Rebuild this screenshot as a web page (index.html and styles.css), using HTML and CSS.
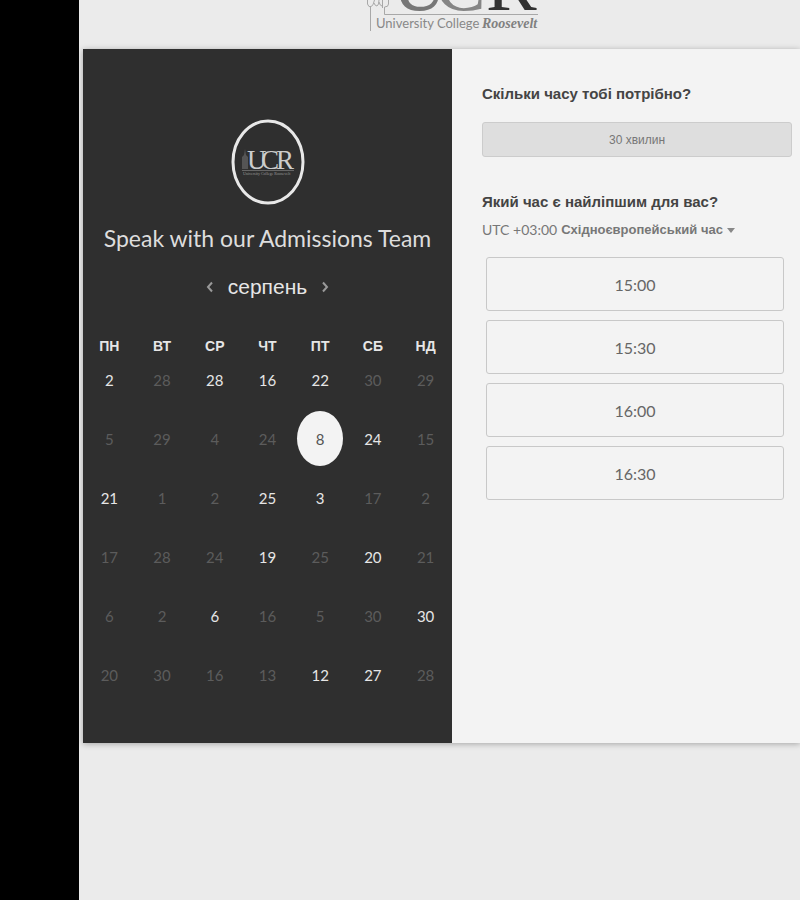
FILE: index.html
```
<!DOCTYPE html>
<html lang="uk">
<head>
<meta charset="utf-8">
<meta name="viewport" content="width=device-width, initial-scale=1">
<title>Speak with our Admissions Team</title>
<link rel="stylesheet" href="styles.css">
</head>
<body>
<div class="page">
  <header class="brand">
    <svg class="brand-logo" width="180" height="36" viewBox="362 0 180 36" role="img" aria-label="University College Roosevelt">
      <g fill="none" stroke="#a8a8a8" stroke-width="1">
        <path d="M370.500 31V6M384.500 14.500H538M384.500 14.500V7"/>
        <path d="M367.500 0v4q1 3 3 3 3-1 4-7M374 3q1 3 3 3 2-1 2-6M379 2q1 4 3 4M384.500 7q4 0 4-3V0M382.500 0v8"/>
      </g>
      <g class="brand-caps">
        <text x="392" y="10" fill="#777">U</text>
        <text x="435" y="10" fill="#858585">C</text>
        <text x="486" y="10" fill="#333">R</text>
      </g>
      <text class="brand-name" x="376" y="28">University College</text>
      <text class="brand-italic" x="482" y="28">Roosevelt</text>
    </svg>
  </header>
  <main class="booking">
    <section class="calendar">
      <svg class="avatar" width="74" height="86" viewBox="0 0 74 86" role="img" aria-label="UCR">
        <ellipse cx="37" cy="43" rx="35" ry="41" fill="none" stroke="#e8e8e8" stroke-width="3"/>
        <path d="M11 50V38l2-2 1-6 1 6 2 2v12z" fill="#555"/>
        <path d="M11 51.500h52" stroke="#666" stroke-width="1"/>
        <g class="avatar-caps">
          <text x="16" y="50">U</text><text x="30" y="50">C</text><text x="45" y="50">R</text>
        </g>
        <text class="avatar-name" x="12" y="56">University College Roosevelt</text>
      </svg>
      <h1>Speak with our Admissions Team</h1>
      <div class="month">
        <button type="button" aria-label="Попередній місяць"><svg width="8" height="12" viewBox="0 0 8 12"><path d="M6 1.500L2 6l4 4.500"/></svg></button>
        <h2>серпень</h2>
        <button type="button" aria-label="Наступний місяць"><svg width="8" height="12" viewBox="0 0 8 12"><path d="M2 1.500L6 6l-4 4.500"/></svg></button>
      </div>
      <table class="days">
        <thead><tr><th>ПН</th><th>ВТ</th><th>СР</th><th>ЧТ</th><th>ПТ</th><th>СБ</th><th>НД</th></tr></thead>
        <tbody>
          <tr><td><button type="button">2</button></td><td><button type="button" disabled>28</button></td><td><button type="button">28</button></td><td><button type="button">16</button></td><td><button type="button">22</button></td><td><button type="button" disabled>30</button></td><td><button type="button" disabled>29</button></td></tr>
          <tr><td><button type="button" disabled>5</button></td><td><button type="button" disabled>29</button></td><td><button type="button" disabled>4</button></td><td><button type="button" disabled>24</button></td><td><button type="button" class="selected" aria-pressed="true">8</button></td><td><button type="button">24</button></td><td><button type="button" disabled>15</button></td></tr>
          <tr><td><button type="button">21</button></td><td><button type="button" disabled>1</button></td><td><button type="button" disabled>2</button></td><td><button type="button">25</button></td><td><button type="button">3</button></td><td><button type="button" disabled>17</button></td><td><button type="button" disabled>2</button></td></tr>
          <tr><td><button type="button" disabled>17</button></td><td><button type="button" disabled>28</button></td><td><button type="button" disabled>24</button></td><td><button type="button">19</button></td><td><button type="button" disabled>25</button></td><td><button type="button">20</button></td><td><button type="button" disabled>21</button></td></tr>
          <tr><td><button type="button" disabled>6</button></td><td><button type="button" disabled>2</button></td><td><button type="button">6</button></td><td><button type="button" disabled>16</button></td><td><button type="button" disabled>5</button></td><td><button type="button" disabled>30</button></td><td><button type="button">30</button></td></tr>
          <tr><td><button type="button" disabled>20</button></td><td><button type="button" disabled>30</button></td><td><button type="button" disabled>16</button></td><td><button type="button" disabled>13</button></td><td><button type="button">12</button></td><td><button type="button">27</button></td><td><button type="button" disabled>28</button></td></tr>
        </tbody>
      </table>
    </section>
    <section class="options">
      <h3>Скільки часу тобі потрібно?</h3>
      <button type="button" class="duration">30 хвилин</button>
      <h3>Який час є найліпшим для вас?</h3>
      <button type="button" class="zone"><span>UTC +03:00</span> <b>Східноєвропейський час</b><svg width="8" height="5" viewBox="0 0 8 5"><path d="M0 0h8L4 5z" fill="#888"/></svg></button>
      <div class="slots">
        <button type="button">15:00</button>
        <button type="button">15:30</button>
        <button type="button">16:00</button>
        <button type="button">16:30</button>
      </div>
    </section>
  </main>
</div>
</body>
</html>
```
FILE: styles.css
```
* { box-sizing: border-box; }

body {
  margin: 0;
  background: #000;
  font-family: "Liberation Sans", sans-serif;
}

button {
  padding: 0;
  border: 0;
  background: none;
  color: inherit;
  font: inherit;
  cursor: pointer;
}

h1, h2, h3 { margin: 0; }

.page {
  min-height: 100vh;
  margin-left: 79px;
  padding-left: 4px;
  background: #ebebeb;
  overflow: hidden;
}

.brand {
  display: flex;
  justify-content: center;
  height: 49px;
  padding-left: 20px;
}

.brand-caps { font: 76px "Liberation Serif", serif; }
.brand-name { font: 13px Lato, sans-serif; fill: #888; }
.brand-italic { font: italic bold 14px "Liberation Serif", serif; fill: #808080; }

.booking {
  display: grid;
  grid-template-columns: 369px 1fr;
  background: #f3f3f3;
  box-shadow: 0 1px 6px rgba(0, 0, 0, 0.3);
}

.calendar {
  display: flex;
  flex-direction: column;
  align-items: center;
  padding: 70px 0 39px;
  background: #2f2f2f;
  color: #e6e6e6;
}

.avatar-caps { font: 27px "Liberation Serif", serif; fill: #ccc; }
.avatar-name { font: 4px "Liberation Serif", serif; fill: #999; }

h1 {
  margin-top: 17px;
  font: 23px/32px Lato, sans-serif;
  color: #ddd;
  white-space: nowrap;
}

.month {
  display: flex;
  align-items: center;
  gap: 14px;
  margin-top: 16px;
}

.month h2 { font-size: 21px; line-height: 34px; font-weight: 400; }

.month button { display: flex; }

.month path { fill: none; stroke: #999; stroke-width: 2; }

.days {
  width: 100%;
  margin-top: 38px;
  border-collapse: collapse;
  table-layout: fixed;
}

.days th {
  height: 8px;
  padding: 0;
  font-size: 14px;
  line-height: 8px;
}

.days td {
  height: 59px;
  padding: 0;
  text-align: center;
  font: 15px Lato, sans-serif;
}

.days td button { width: 46px; height: 55px; border-radius: 50%; }

.days button:disabled { color: #5c5c5c; }

.days .selected { background: #f3f3f3; color: #555; }

.options {
  display: flex;
  flex-direction: column;
  padding: 35px 8px 30px 30px;
  color: #444;
}

.options h3 { font-size: 15px; line-height: 20px; }

.duration {
  height: 35px;
  margin: 18px 0 35px;
  border: 1px solid #ccc;
  border-radius: 3px;
  background: #dedede;
  color: #777;
  font-size: 12px;
}

.zone {
  display: flex;
  align-items: center;
  align-self: flex-start;
  gap: 4px;
  margin-top: 8px;
  color: #777;
  font-size: 13px;
  line-height: 20px;
}

.zone span { font-family: Lato, sans-serif; font-size: 14px; }

.slots {
  display: grid;
  gap: 9px;
  margin: 17px 8px 0 4px;
}

.slots button {
  height: 54px;
  border: 1px solid #c8c8c8;
  border-radius: 3px;
  color: #666;
  font: 16px Lato, sans-serif;
}
```
